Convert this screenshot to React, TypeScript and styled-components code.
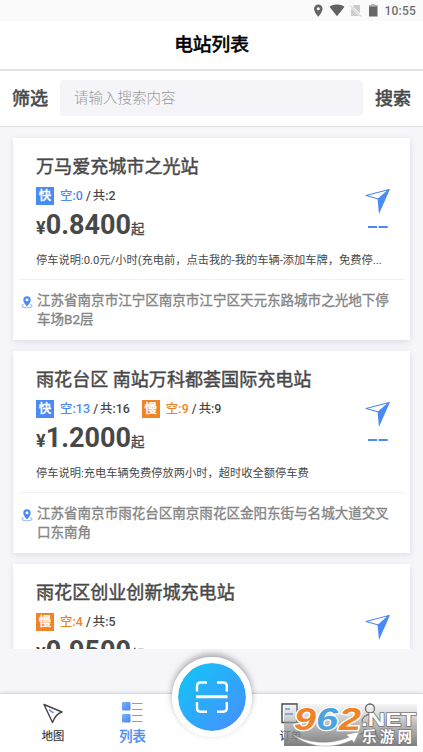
import React from "react";
import styled, { createGlobalStyle } from "styled-components";

const Global = createGlobalStyle`
  * { box-sizing: border-box; }
  html, body { margin: 0; padding: 0; }
  body { font-family: Roboto, "Noto Sans CJK SC", sans-serif; color: #484848; overflow: hidden; }
`;

const BLUE = "#4a8af4";
const ORANGE = "#f08326";

const Screen = styled.div`
  width: 423px;
  height: 752px;
  display: flex;
  flex-direction: column;
  background: #f5f5fa;
  position: relative;
  overflow: hidden;
`;

const StatusBar = styled.div`
  height: 21px;
  flex: none;
  background: #fafafa;
  display: flex;
  justify-content: flex-end;
  padding-right: 7px;
`;

const StatusIcons = styled.svg`
  width: 68px;
  height: 21px;
  margin-right: 4px;
`;

const Clock = styled.span`
  font: 500 12px/22px Roboto, sans-serif;
  letter-spacing: 0.2px;
  color: #707070;
`;

const Header = styled.header`
  height: 50px;
  flex: none;
  background: #fff;
  border-bottom: 2px solid #e4e4e6;
  text-align: center;
  font-size: 18.7px;
  line-height: 49px;
  color: #000;
  -webkit-text-stroke: 0.65px #000;
`;

const SearchBar = styled.div`
  height: 56px;
  flex: none;
  background: #fff;
  border-bottom: 1px solid #e0e0e3;
  display: flex;
  align-items: center;
  padding: 0 12px 1px;
  gap: 12px;
`;

const SearchAction = styled.span`
  width: 36px;
  font-size: 18px;
  line-height: 54px;
  padding-top: 2px;
  white-space: nowrap;
  -webkit-text-stroke: 0.6px #484848;
`;

const SearchField = styled.div`
  flex: 1;
  height: 36px;
  border-radius: 4px;
  background: #f5f5f9;
  padding-left: 14px;
  font-size: 14.5px;
  font-weight: 300;
  line-height: 38px;
  color: #999;
`;

const List = styled.main`
  height: 522px;
  flex: none;
  overflow: hidden;
  padding: 11px 13px 0;
`;

const Card = styled.article`
  width: 397px;
  height: 202px;
  margin-bottom: 11px;
  background: #fff;
  box-shadow: 0 2px 6px rgba(70, 70, 100, 0.13);
  display: flex;
  flex-direction: column;
`;

const CardTop = styled.div`
  height: 142px;
  flex: none;
  margin: 0 5px 0 6px;
  padding: 15px 0 0 17px;
  border-bottom: 1px solid #efeff1;
  display: flex;
`;

const Info = styled.div`
  width: 327px;
  flex: none;
`;

const Name = styled.div`
  height: 27px;
  line-height: 27px;
  font-size: 18.07px;
  white-space: nowrap;
  -webkit-text-stroke: 0.45px #484848;
`;

const Counts = styled.div`
  height: 18px;
  margin-top: 7px;
  display: flex;
  align-items: center;
`;

const CountGroup = styled.div`
  display: flex;
  align-items: center;
  margin-right: 12px;
  font-size: 12.4px;
  font-weight: 500;
  line-height: 18px;
  white-space: nowrap;
`;

const Badge = styled.span<{ $color: string }>`
  width: 18px;
  height: 18px;
  margin-right: 6px;
  background: ${(p) => p.$color};
  color: #fff;
  text-align: center;
  font-size: 12.5px;
  -webkit-text-stroke: 0.3px #fff;
`;

const Free = styled.span<{ $color: string }>`
  color: ${(p) => p.$color};
  letter-spacing: 0.1px;
`;

const Slash = styled.span`
  margin: 0 2px 0 3px;
`;

const Price = styled.div`
  height: 36px;
  margin-top: 2px;
  display: flex;
  align-items: baseline;
  line-height: 36px;
  font-weight: 700;
`;

const Currency = styled.span`
  font-size: 18px;
`;

const Amount = styled.span`
  font-size: 27px;
`;

const From = styled.span`
  font-size: 13.5px;
  font-weight: 400;
  -webkit-text-stroke: 0.35px #484848;
`;

const Note = styled.div`
  width: 348px;
  height: 18px;
  margin-top: 9px;
  font-size: 11.26px;
  line-height: 18px;
  white-space: nowrap;
  overflow: hidden;
  text-overflow: ellipsis;
`;

const Navigate = styled.svg`
  width: 26px;
  height: 46px;
  margin: 35px 0 0 2px;
  flex: none;
`;

const AddressRow = styled.div`
  display: flex;
  padding: 11px 0 0 8px;
`;

const Pin = styled.svg`
  width: 12px;
  height: 14px;
  margin: 4px 4px 0 0;
  flex: none;
`;

const Address = styled.div`
  font-size: 13.54px;
  line-height: 19px;
  color: #858585;
  white-space: pre;
  -webkit-text-stroke: 0.35px #858585;
`;

const TabBar = styled.nav`
  margin-top: auto;
  height: 59px;
  flex: none;
  background: #fff;
  border-top: 1px solid #d7d7db;
  box-shadow: 0 -1px 3px rgba(0, 0, 0, 0.08);
  display: grid;
  grid-template-columns: 106px 53px 105px 53px 106px;
`;

const Tab = styled.div<{ $active?: boolean }>`
  display: flex;
  flex-direction: column;
  align-items: center;
  padding-top: 6px;
  font-size: ${(p) => (p.$active ? "13.3px" : "11.3px")};
  line-height: 20px;
  color: ${(p) => (p.$active ? BLUE : "#333")};
  -webkit-text-stroke: ${(p) => (p.$active ? "0.4px" : "0.15px")} currentColor;

  svg {
    width: 24px;
    height: 26px;
    margin-bottom: 1px;
    flex: none;
  }
`;

const ScanButton = styled.button`
  position: absolute;
  left: 172px;
  top: 657px;
  width: 80px;
  height: 80px;
  border: 6px solid #fff;
  border-radius: 50%;
  padding: 0;
  background: linear-gradient(135deg, #12c5f6 10%, #4690ff 88%) border-box;
  background-clip: padding-box;
  box-shadow: 0 -3px 6px rgba(60, 60, 60, 0.42);
  clip-path: polygon(-10px -12px, 90px -12px, 90px 36px, 80px 90px, 0 90px, -10px 36px);
`;

const ScanIcon = styled.svg`
  display: block;
  width: 68px;
  height: 68px;
`;

const Stamp = styled.svg`
  position: absolute;
  left: 284px;
  top: 700px;
  width: 139px;
  height: 52px;
`;

type Count = { kind: "快" | "慢"; free: number; total: number };
type Station = { name: string; counts: Count[]; price: string; note: string; address: string };

const stations: Station[] = [
  {
    name: "万马爱充城市之光站",
    counts: [{ kind: "快", free: 0, total: 2 }],
    price: "0.8400",
    note: "停车说明:0.0元/小时(充电前，点击我的-我的车辆-添加车牌，免费停...",
    address: "江苏省南京市江宁区南京市江宁区天元东路城市之光地下停\n车场B2层",
  },
  {
    name: "雨花台区 南站万科都荟国际充电站",
    counts: [
      { kind: "快", free: 13, total: 16 },
      { kind: "慢", free: 9, total: 9 },
    ],
    price: "1.2000",
    note: "停车说明:充电车辆免费停放两小时，超时收全额停车费",
    address: "江苏省南京市雨花台区南京雨花区金阳东街与名城大道交叉\n口东南角",
  },
  {
    name: "雨花区创业创新城充电站",
    counts: [{ kind: "慢", free: 4, total: 5 }],
    price: "0.9500",
    note: "",
    address: "",
  },
];

function StationCard({ s }: { s: Station }) {
  return (
    <Card>
      <CardTop>
        <Info>
          <Name>{s.name}</Name>
          <Counts>
            {s.counts.map((c) => {
              const color = c.kind === "快" ? BLUE : ORANGE;
              return (
                <CountGroup key={c.kind}>
                  <Badge $color={color}>{c.kind}</Badge>
                  <Free $color={color}>空:{c.free}</Free>
                  <Slash>/</Slash>
                  <span>共:{c.total}</span>
                </CountGroup>
              );
            })}
          </Counts>
          <Price>
            <Currency>¥</Currency>
            <Amount>{s.price}</Amount>
            <From>起</From>
          </Price>
          <Note>{s.note}</Note>
        </Info>
        <Navigate viewBox="0 0 26 46">
          <path d="M1 7.500L24 1.500L13.500 11Z" fill="none" stroke={BLUE} strokeWidth="1.100" strokeLinejoin="round" />
          <path d="M25 1L14 26L12.600 11Z" fill={BLUE} />
          <path d="M3 39H12M13.500 39H22.700" stroke={BLUE} strokeWidth="1.800" />
        </Navigate>
      </CardTop>
      <AddressRow>
        <Pin viewBox="0 0 12 14">
          <path d="M2.600 9.600C-.4 10.800 1 12.800 6 12.800S12.400 10.800 9.400 9.600" fill="none" stroke="#9bbcf5" strokeWidth="1.100" />
          <path d="M6 11.500C4.500 9.600 2.300 7.200 2.300 4.900a3.700 3.700 0 0 1 7.400 0C9.700 7.200 7.500 9.600 6 11.500Z" fill={BLUE} />
          <circle cx="6" cy="4.800" r="1.500" fill="#fff" />
        </Pin>
        <Address>{s.address}</Address>
      </AddressRow>
    </Card>
  );
}

export default function App() {
  return (
    <Screen>
      <Global />
      <StatusBar>
        <StatusIcons viewBox="0 0 68 21">
          <path d="M5.300 4.500a4.300 4.300 0 0 0-4.300 4.300c0 3.200 4.300 8 4.300 8s4.300-4.800 4.300-8a4.300 4.300 0 0 0-4.300-4.300Zm0 2.800a1.500 1.500 0 1 1 0 3a1.500 1.500 0 0 1 0-3Z" fill="#666" fillRule="evenodd" />
          <path d="M16.500 6.800C20.500 3.600 27.500 3.600 31.500 6.800L24 16.200Z" fill="#616161" />
          <path d="M41 5H47V13.500L39.500 6.300ZM38 8L46 16H38Z" fill="#ccc" />
          <path d="M37 5.500L48 16.500" stroke="#c4c4c4" strokeWidth="1" />
          <path d="M56 5.300H58V4H62V5.300H64.500V16.500H56Z" fill="#666" />
          <path d="M56 5.300H58V4H62V5.300H64.500V6.500H56Z" fill="#bbb" />
        </StatusIcons>
        <Clock>10:55</Clock>
      </StatusBar>
      <Header>电站列表</Header>
      <SearchBar>
        <SearchAction>筛选</SearchAction>
        <SearchField>请输入搜索内容</SearchField>
        <SearchAction>搜索</SearchAction>
      </SearchBar>
      <List>
        {stations.map((s) => (
          <StationCard key={s.name} s={s} />
        ))}
      </List>
      <TabBar>
        <Tab>
          <svg viewBox="0 0 24 26">
            <path d="M3 4.500L21 12Q15 13.500 11.500 22.500Z" fill="none" stroke="#444" strokeWidth="1.400" strokeLinejoin="round" />
            <path d="M8 9.500L12.500 13" stroke={BLUE} strokeWidth="1.500" />
          </svg>
          地图
        </Tab>
        <Tab $active>
          <svg viewBox="0 0 24 26">
            <defs>
              <linearGradient id="tile" x1="0" y1="0" x2="1" y2="1">
                <stop offset="0" stopColor="#7db3fa" />
                <stop offset="1" stopColor="#4686f2" />
              </linearGradient>
            </defs>
            <rect x="1" y="2" width="8.500" height="8.500" rx="1" fill="url(#tile)" />
            <rect x="1" y="14" width="8.500" height="8.500" rx="1" fill="url(#tile)" />
            <path d="M11 3.500H21.500M11 9.500H21.500M11 15.500H21.500M11 21.500H21.500" stroke="#69a1f6" strokeWidth="1.200" />
          </svg>
          列表
        </Tab>
        <span />
        <Tab>
          <svg viewBox="0 0 24 26">
            <path d="M3 4H18V22.500H3Z" fill="none" stroke="#444" strokeWidth="1.400" />
            <path d="M6 9H11M6 14H14" stroke={BLUE} strokeWidth="1.500" />
          </svg>
          订单
        </Tab>
        <Tab>
          <svg viewBox="0 0 24 26">
            <circle cx="12" cy="8.500" r="4.500" fill="none" stroke="#555" strokeWidth="1.300" />
            <path d="M4 22C4 12 20 12 20 22" fill="none" stroke="#555" strokeWidth="1.300" />
          </svg>
          个人
        </Tab>
      </TabBar>
      <ScanButton aria-label="扫码">
        <ScanIcon viewBox="0 0 68 68" fill="none" stroke="#fff" strokeWidth="2.400">
          <path d="M19 28.500V23Q19 19.500 22.500 19.500H29M39 19.500H45Q48.800 19.500 48.800 23V28.500M19 39V45Q19 48.700 22.500 48.700H29M39 48.700H45Q48.800 48.700 48.800 45V39" />
          <path d="M18 33.700H49.500" strokeWidth="3" />
        </ScanIcon>
      </ScanButton>
      <Stamp viewBox="0 0 139 52">
        <defs>
          <linearGradient id="shade" x1="0" y1="0" x2="0" y2="1">
            <stop offset="0" stopColor="#bbb" stopOpacity="0.15" />
            <stop offset="0.5" stopColor="#999" stopOpacity="0.7" />
            <stop offset="1" stopColor="#777" stopOpacity="0.95" />
          </linearGradient>
        </defs>
        <rect y="4" width="133" height="42" fill="url(#shade)" />
        <path d="M8 34C26 45 50 44 65 37L62 34.500L75 32L70 43L68 40C50 49 25 49 8 34Z" fill="#fff" stroke="#999" strokeWidth=".5" />
        <g fontFamily="Liberation Sans" fontWeight="700" fontStyle="italic" fontSize="32" stroke="#fff" strokeWidth="2.500" paintOrder="stroke">
          <text x="10" y="29.500" textLength="22" lengthAdjust="spacingAndGlyphs" fill={ORANGE}>9</text>
          <text x="32" y="29.500" textLength="22" lengthAdjust="spacingAndGlyphs" fill="#4da3dc">6</text>
          <text x="55" y="29.500" textLength="22" lengthAdjust="spacingAndGlyphs" fill={ORANGE}>2</text>
        </g>
        <g fill="#fff" stroke="#777" strokeWidth="1.400" paintOrder="stroke" fontWeight="700">
          <text x="77" y="25.500" fontFamily="Liberation Sans" fontSize="19" textLength="55" lengthAdjust="spacingAndGlyphs">.NET</text>
          <text x="78" y="42" fontFamily="Noto Sans CJK SC" fontSize="14.500" textLength="50">乐游网</text>
        </g>
      </Stamp>
    </Screen>
  );
}
